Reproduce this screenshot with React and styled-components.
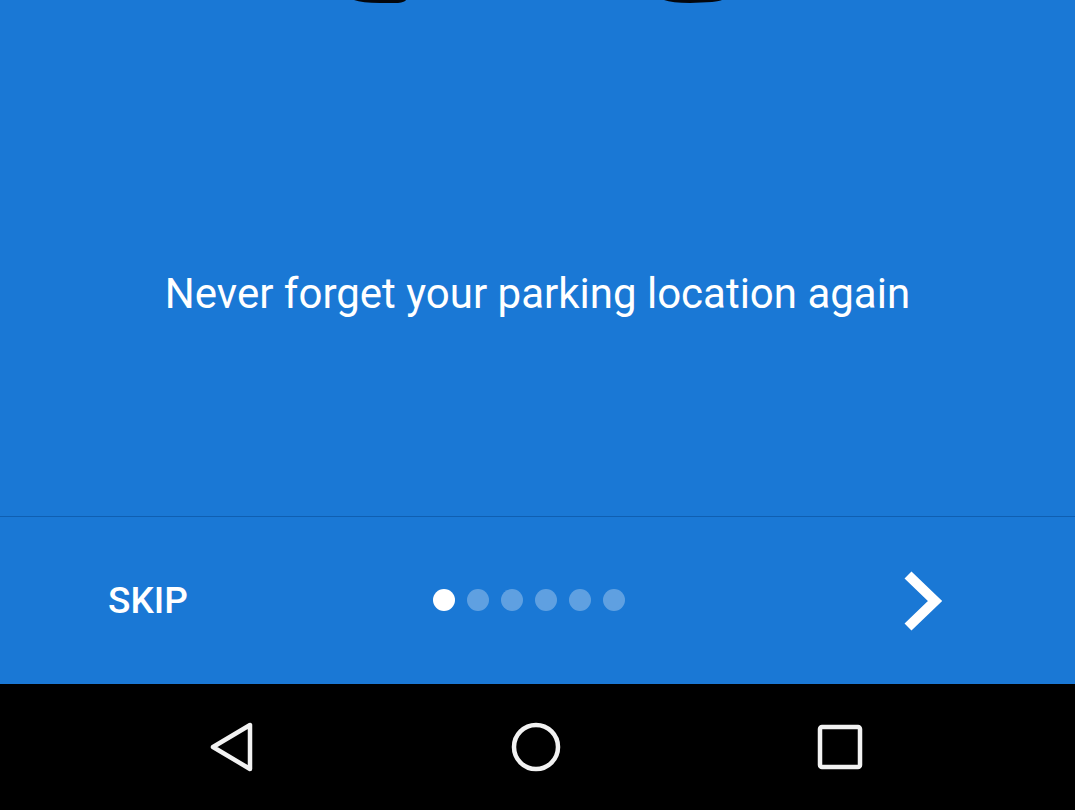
import React from 'react';
import styled, { createGlobalStyle } from 'styled-components';

const GlobalStyle = createGlobalStyle`
  html, body {
    margin: 0;
    padding: 0;
    background: #000;
  }
  body {
    font-family: Roboto, 'Noto Sans', sans-serif;
  }
`;

const Screen = styled.div`
  width: 1075px;
  height: 810px;
  display: flex;
  flex-direction: column;
  overflow: hidden;
  background: #1a78d5;
`;

const Hero = styled.div`
  height: 516px;
  display: flex;
  flex-direction: column;
  align-items: center;
`;

const Illustration = styled.svg`
  display: block;
  flex-shrink: 0;
`;

const Caption = styled.p`
  margin: 264px 0 0;
  font-size: 42px;
  line-height: 50px;
  font-weight: 400;
  color: #fff;
  letter-spacing: 0;
`;

const Divider = styled.div`
  height: 1px;
  background: #0f5fb2;
`;

const Footer = styled.div`
  height: 167px;
  display: flex;
  align-items: center;
  padding: 0 132px 0 108px;
`;

const Skip = styled.button`
  width: 325px;
  flex-shrink: 0;
  padding: 0;
  text-align: left;
  background: none;
  border: none;
  color: #fff;
  font-family: Roboto, sans-serif;
  font-size: 37px;
  font-weight: 500;
  cursor: pointer;
`;

const Dots = styled.div`
  display: flex;
  gap: 12px;
  margin-top: -2px;
`;

const Dot = styled.span`
  width: 22px;
  height: 22px;
  border-radius: 50%;
  background: ${(p) => (p.$active ? '#ffffff' : 'rgba(255, 255, 255, 0.3)')};
`;

const Spacer = styled.div`
  flex: 1;
`;

const NextButton = styled.button`
  padding: 0;
  background: none;
  border: none;
  display: flex;
  cursor: pointer;
`;

const NavBar = styled.div`
  height: 126px;
  background: #000;
  display: flex;
  align-items: center;
  justify-content: center;
  gap: 254px;
  padding-right: 3px;
`;

const NavIcon = styled.svg`
  display: block;
`;

const App = () => {
  const dots = [0, 1, 2, 3, 4, 5];

  return (
    <Screen>
      <GlobalStyle />
      <Hero>
        <Illustration width="1075" height="5" viewBox="0 0 1075 5">
          <path d="M354 0 Q362 3 380 3 L398 3 Q405 2 406 0 Z" fill="#04070d" />
          <path d="M664 0 Q672 3 690 3 L712 2 Q720 1 722 0 Z" fill="#04070d" />
        </Illustration>
        <Caption>Never forget your parking location again</Caption>
      </Hero>
      <Divider />
      <Footer>
        <Skip>SKIP</Skip>
        <Dots>
          {dots.map((d) => (
            <Dot key={d} $active={d === 0} />
          ))}
        </Dots>
        <Spacer />
        <NextButton aria-label="next">
          <svg width="40" height="64" viewBox="0 0 40 64">
            <polyline
              points="5,6 32,32 5,58"
              fill="none"
              stroke="#fff"
              strokeWidth="10"
              strokeLinejoin="miter"
            />
          </svg>
        </NextButton>
      </Footer>
      <NavBar>
        <NavIcon width="50" height="50" viewBox="0 0 50 50">
          <polygon
            points="6,25 43,3 43,47"
            fill="none"
            stroke="#f2f2f2"
            strokeWidth="4.5"
            strokeLinejoin="round"
          />
        </NavIcon>
        <NavIcon width="50" height="50" viewBox="0 0 50 50">
          <circle cx="25" cy="25" r="22" fill="none" stroke="#f2f2f2" strokeWidth="4.5" />
        </NavIcon>
        <NavIcon width="50" height="50" viewBox="0 0 50 50">
          <rect x="5" y="5" width="40" height="40" rx="2" fill="none" stroke="#f2f2f2" strokeWidth="4.5" />
        </NavIcon>
      </NavBar>
    </Screen>
  );
};

export default App;
